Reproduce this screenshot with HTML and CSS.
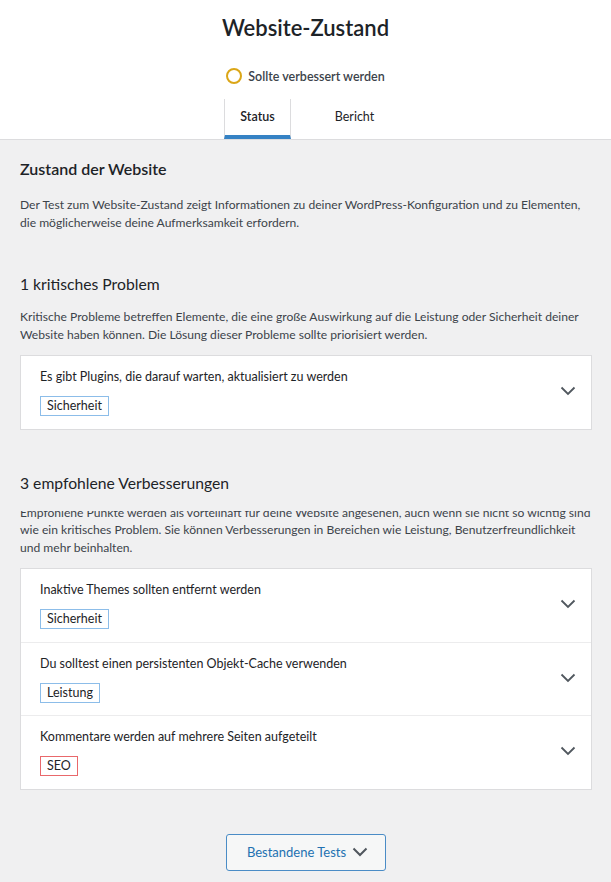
FILE: index.html
```html
<!DOCTYPE html>
<html lang="de">
<head>
  <meta charset="UTF-8">
  <title>Website-Zustand</title>
  <link rel="stylesheet" href="styles.css">
</head>
<body>
  <div class="header">
    <h1>Website-Zustand</h1>
    <div class="status">
      <span class="ring"></span>
      <span class="status-text">Sollte verbessert werden</span>
    </div>
    <nav class="tabs">
      <a class="tab active">Status</a>
      <a class="tab">Bericht</a>
    </nav>
  </div>

  <div class="body">
    <h2>Zustand der Website</h2>
    <p class="intro">Der Test zum Website-Zustand zeigt Informationen zu deiner WordPress-Konfiguration und zu Elementen,<br>die möglicherweise deine Aufmerksamkeit erfordern.</p>

    <h3>1 kritisches Problem</h3>
    <p>Kritische Probleme betreffen Elemente, die eine große Auswirkung auf die Leistung oder Sicherheit deiner<br>Website haben können. Die Lösung dieser Probleme sollte priorisiert werden.</p>
    <div class="list">
      <div class="item">
        <div class="item-text">
          <div class="item-title">Es gibt Plugins, die darauf warten, aktualisiert zu werden</div>
          <span class="badge">Sicherheit</span>
        </div>
        <svg class="chev" width="16" height="10" viewBox="0 0 16 10"><path d="M1.5 1.5 L8 8 L14.5 1.5" fill="none" stroke="#50575e" stroke-width="1.8"/></svg>
      </div>
    </div>

    <h3 class="cover">3 empfohlene Verbesserungen</h3>
    <p class="under">Empfohlene Punkte werden als vorteilhaft für deine Website angesehen, auch wenn sie nicht so wichtig sind<br>wie ein kritisches Problem. Sie können Verbesserungen in Bereichen wie Leistung, Benutzerfreundlichkeit<br>und mehr beinhalten.</p>
    <div class="list">
      <div class="item">
        <div class="item-text">
          <div class="item-title">Inaktive Themes sollten entfernt werden</div>
          <span class="badge">Sicherheit</span>
        </div>
        <svg class="chev" width="16" height="10" viewBox="0 0 16 10"><path d="M1.5 1.5 L8 8 L14.5 1.5" fill="none" stroke="#50575e" stroke-width="1.8"/></svg>
      </div>
      <div class="item">
        <div class="item-text">
          <div class="item-title">Du solltest einen persistenten Objekt-Cache verwenden</div>
          <span class="badge">Leistung</span>
        </div>
        <svg class="chev" width="16" height="10" viewBox="0 0 16 10"><path d="M1.5 1.5 L8 8 L14.5 1.5" fill="none" stroke="#50575e" stroke-width="1.8"/></svg>
      </div>
      <div class="item">
        <div class="item-text">
          <div class="item-title">Kommentare werden auf mehrere Seiten aufgeteilt</div>
          <span class="badge red">SEO</span>
        </div>
        <svg class="chev" width="16" height="10" viewBox="0 0 16 10"><path d="M1.5 1.5 L8 8 L14.5 1.5" fill="none" stroke="#50575e" stroke-width="1.8"/></svg>
      </div>
    </div>

    <div class="more">
      <button class="passed">Bestandene Tests
        <svg width="16" height="10" viewBox="0 0 16 10"><path d="M1.5 1.5 L8 8 L14.5 1.5" fill="none" stroke="#50575e" stroke-width="2"/></svg>
      </button>
    </div>
  </div>
</body>
</html>
```

FILE: styles.css
```css
body {
  margin: 0;
  background: #f0f0f1;
  color: #1d2327;
  font-family: Lato, "Liberation Sans", sans-serif;
  font-size: 12.5px;
}
.header {
  background: #fff;
  border-bottom: 1px solid #dcdcde;
  text-align: center;
}
h1 {
  margin: 0;
  padding-top: 13px;
  font-size: 22px;
  font-weight: 600;
  line-height: 29px;
}
.status {
  display: flex;
  justify-content: center;
  align-items: center;
  gap: 6px;
  margin-top: 26px;
}
.ring {
  width: 12px;
  height: 12px;
  border: 2px solid #dba617;
  border-radius: 50%;
}
.status-text {
  font-weight: 600;
  color: #3c434a;
}
.tabs {
  display: flex;
  justify-content: center;
  margin-top: 15px;
}
.tab {
  width: 65px;
  padding: 9px 0 9px;
  line-height: 18px;
  color: #1d2327;
  border-bottom: 4px solid transparent;
}
.tab + .tab {
  margin-left: 31px;
}
.tab.active {
  font-weight: 600;
  border-left: 1px solid #dcdcde;
  border-right: 1px solid #dcdcde;
  border-bottom-color: #3582c4;
}
.body {
  padding: 0 19px 12px 20px;
}
h2 {
  margin: 18px 0 0;
  font-size: 16px;
  font-weight: 600;
  line-height: 22px;
}
h3 {
  margin: 42px 0 0;
  font-size: 15.7px;
  font-weight: 400;
  line-height: 22px;
}
p {
  margin: 13px -14px 0 0;
  font-size: 12.1px;
  line-height: 17.5px;
  color: #3c434a;
}
.intro {
  margin-top: 16px;
}
.cover {
  position: relative;
  z-index: 1;
  background: #f0f0f1;
  padding-bottom: 17px;
  margin-top: 42px;
}
.under {
  margin-top: -7px;
}
.list {
  margin-top: 12px;
  background: #fff;
  border: 1px solid #dcdcde;
}
.item {
  display: flex;
  align-items: center;
  padding: 12px 15px 12.5px 19px;
}
.item + .item {
  border-top: 1px solid #ececed;
}
.item-text {
  flex: 1;
  display: flex;
  flex-direction: column;
  align-items: flex-start;
  gap: 10px;
}
.item-title {
  line-height: 18px;
  color: #1d2327;
}
.badge {
  padding: 0 6px;
  line-height: 18px;
  border: 1px solid #8cbde9;
  color: #1d2327;
}
.badge.red {
  border-color: #e9686b;
}
.chev {
  margin-top: -2px;
}
.more {
  text-align: center;
  margin-top: 44px;
}
.passed {
  font-family: inherit;
  font-size: 13px;
  color: #2271b1;
  background: #f6f7f7;
  border: 1px solid #4a8cc6;
  border-radius: 3px;
  padding: 0 17px 0 20px;
  height: 37px;
  display: inline-flex;
  align-items: center;
  gap: 6px;
}
```
